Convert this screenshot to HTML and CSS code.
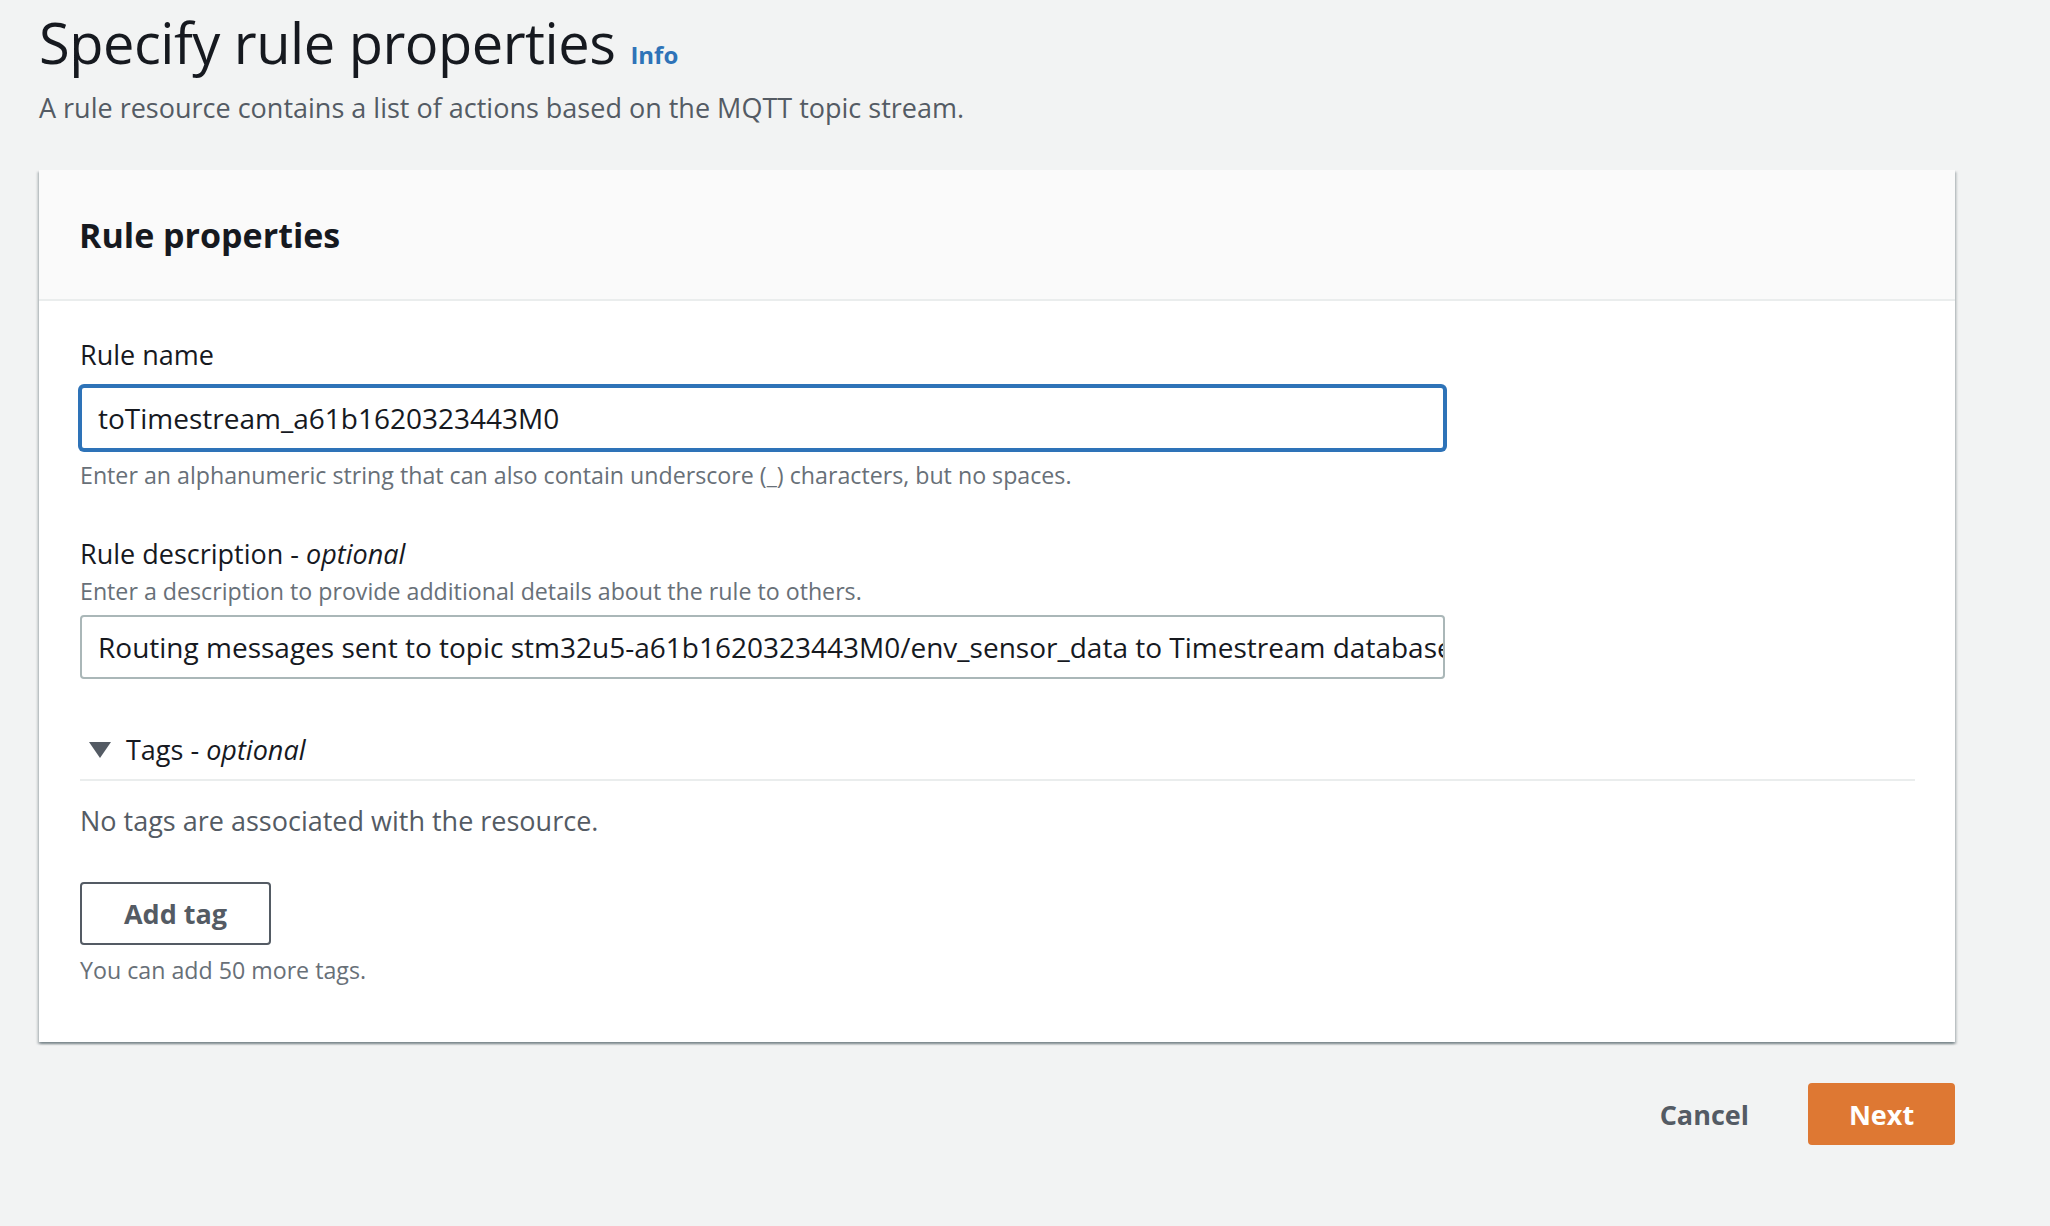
FILE: index.html
```html
<!DOCTYPE html>
<html lang="en">
<head>
<meta charset="utf-8">
<title>Specify rule properties</title>
<link rel="stylesheet" href="styles.css">
</head>
<body>
<main class="page">
  <header class="page-header">
    <h1 class="title">Specify rule properties <a class="info" href="#">Info</a></h1>
    <p class="subtitle">A rule resource contains a list of actions based on the MQTT topic stream.</p>
  </header>

  <section class="card">
    <div class="card-header">
      <h2 class="card-title">Rule properties</h2>
    </div>
    <div class="card-body">
      <label class="label label-first">Rule name</label>
      <div class="input input-focus">toTimestream_a61b1620323443M0</div>
      <p class="hint hint-after-input">Enter an alphanumeric string that can also contain underscore (_) characters, but no spaces.</p>

      <label class="label label-desc">Rule description - <em>optional</em></label>
      <p class="hint hint-desc">Enter a description to provide additional details about the rule to others.</p>
      <div class="input input-plain">Routing messages sent to topic stm32u5-a61b1620323443M0/env_sensor_data to Timestream database</div>

      <div class="tags-row">
        <span class="caret"></span>
        <span class="tags-label">Tags - <em>optional</em></span>
      </div>
      <p class="empty">No tags are associated with the resource.</p>
      <button class="btn btn-normal" type="button">Add tag</button>
      <p class="hint hint-tags">You can add 50 more tags.</p>
    </div>
  </section>

  <footer class="actions">
    <button class="btn btn-link" type="button">Cancel</button>
    <button class="btn btn-primary" type="button">Next</button>
  </footer>
</main>
</body>
</html>
```

FILE: styles.css
```css
* { box-sizing: border-box; }

html, body {
  margin: 0;
  padding: 0;
  background: #f2f3f3;
}

body {
  font-family: "Open Sans", "Noto Sans", sans-serif;
  color: #16191f;
  width: 2050px;
  height: 1226px;
  overflow: hidden;
}

.page {
  padding-left: 39px;
  width: 1955px;
}

.page-header {
  padding-top: 4px;
}

.title {
  margin: 0;
  font-size: 56px;
  font-weight: 400;
  line-height: 76px;
  letter-spacing: -0.5px;
  color: #16191f;
}

.info {
  font-size: 24px;
  font-weight: 700;
  color: #2e73b8;
  text-decoration: none;
  margin-left: 1px;
  letter-spacing: 0;
}

.subtitle {
  margin: -5px 0 0 0;
  font-size: 27px;
  line-height: 40px;
  color: #545b64;
}

.card {
  margin-top: 42px;
  background: #ffffff;
  box-shadow: 0 2px 2px 0 rgba(0, 28, 36, 0.3), 2px 2px 2px 0 rgba(0, 28, 36, 0.15), -2px 2px 2px 0 rgba(0, 28, 36, 0.15);
}

.card-header {
  background: #fafafa;
  border-bottom: 2px solid #eaeded;
  height: 131px;
  padding: 0 40px;
  display: flex;
  align-items: center;
}

.card-title {
  margin: 0;
  font-size: 34px;
  font-weight: 700;
  line-height: 48px;
  color: #16191f;
}

.card-body {
  padding: 36px 40px 56px 41px;
  display: flex;
  flex-direction: column;
  align-items: flex-start;
}

.label {
  display: block;
  font-size: 27px;
  line-height: 36px;
  color: #16191f;
}

.label em { font-style: italic; }

.input {
  width: 1365px;
  height: 64px;
  border-radius: 4px;
  padding: 0 16px;
  display: flex;
  align-items: center;
  font-size: 28px;
  color: #16191f;
  white-space: nowrap;
  overflow: hidden;
  background: #fff;
}

.input-focus {
  margin-top: 13px;
  border: 2px solid #2e73b8;
  box-shadow: 0 0 0 2px #2e73b8;
}

.input-plain {
  margin-top: 8px;
  border: 2px solid #aab7b8;
}

.hint {
  margin: 0;
  font-size: 23.2px;
  line-height: 32px;
  color: #687078;
}

.hint-after-input { margin-top: 9px; }
.label-desc { margin-top: 45px; }
.hint-desc { margin-top: 3px; }

.tags-row {
  margin-top: 53px;
  width: 100%;
  display: flex;
  align-items: center;
  padding-bottom: 11px;
  border-bottom: 2px solid #eaeded;
  height: 49px;
}

.caret {
  width: 0;
  height: 0;
  margin-left: 9px;
  margin-right: 15px;
  border-left: 11px solid transparent;
  border-right: 11px solid transparent;
  border-top: 16px solid #545b64;
}

.tags-label {
  font-size: 27px;
  line-height: 36px;
  color: #16191f;
}

.empty {
  margin: 22px 0 0 0;
  font-size: 27px;
  line-height: 36px;
  color: #545b64;
}

.btn {
  font-family: inherit;
  font-weight: 700;
  font-size: 27px;
  cursor: pointer;
}

.btn-normal {
  margin-top: 43px;
  width: 191px;
  height: 63px;
  background: #fff;
  border: 2px solid #545b64;
  border-radius: 4px;
  color: #545b64;
}

.hint-tags { margin-top: 9px; }

.actions {
  margin-top: 41px;
  display: flex;
  justify-content: flex-end;
  align-items: center;
  gap: 20px;
}

.btn-link {
  background: transparent;
  border: none;
  color: #545b64;
  height: 62px;
  padding: 0 39px;
}

.btn-primary {
  width: 147px;
  height: 62px;
  background: #de7833;
  border: none;
  border-radius: 4px;
  color: #ffffff;
}
```
